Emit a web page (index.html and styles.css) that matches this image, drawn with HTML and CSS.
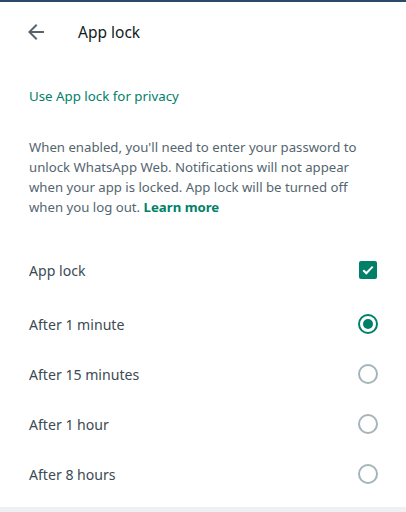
FILE: index.html
```html
<!DOCTYPE html>
<html>
<head>
<meta charset="utf-8">
<link rel="stylesheet" href="styles.css">
</head>
<body>
<div class="panel">
  <header class="header">
    <button class="back" aria-label="Back">
      <svg width="24" height="24" viewBox="0 0 24 24"><path d="M12 4l1.4 1.4L7.8 11H20v2H7.8l5.6 5.6L12 20l-8-8 8-8z" fill="currentColor"/></svg>
    </button>
    <h1 class="title">App lock</h1>
  </header>
  <div class="content">
    <div class="section-title">Use App lock for privacy</div>
    <p class="desc">When enabled, you'll need to enter your password to unlock WhatsApp Web. Notifications will not appear when your app is locked. App lock will be turned off when you log out. <a class="learn" href="#">Learn more</a></p>
    <div class="row row-first">
      <span class="label">App lock</span>
      <span class="checkbox">
        <svg width="12" height="10" viewBox="0 0 12 10"><path d="M1.3 5.2l3 3 6.4-6.6" fill="none" stroke="#fff" stroke-width="2"/></svg>
      </span>
    </div>
    <div class="row">
      <span class="label">After 1 minute</span>
      <span class="radio checked"></span>
    </div>
    <div class="row">
      <span class="label">After 15 minutes</span>
      <span class="radio"></span>
    </div>
    <div class="row">
      <span class="label">After 1 hour</span>
      <span class="radio"></span>
    </div>
    <div class="row">
      <span class="label">After 8 hours</span>
      <span class="radio"></span>
    </div>
  </div>
  <div class="footer"></div>
</div>
</body>
</html>
```
FILE: styles.css
```css
* { box-sizing: border-box; }
html, body { margin: 0; padding: 0; }
body {
  font-family: "Segoe UI", "Noto Sans", "Open Sans", sans-serif;
  background: #fff;
  width: 406px;
  height: 512px;
  overflow: hidden;
}
.panel {
  height: 512px;
  border-top: 2px solid #2b4a6a;
  display: flex;
  flex-direction: column;
}
.header {
  height: 60px;
  display: flex;
  align-items: center;
  padding-left: 24px;
}
.back {
  border: 0;
  background: none;
  padding: 0;
  color: #54656f;
  width: 24px;
  height: 24px;
  display: flex;
}
.title {
  margin: 0 0 0 30px;
  font-size: 15.5px;
  font-weight: 400;
  color: #111b21;
}
.content {
  flex: 1;
  padding: 0 28px 0 29px;
}
.section-title {
  margin-top: 24px;
  font-size: 13.3px;
  color: #008069;
  line-height: 20px;
}
.desc {
  margin: 31px 0 0;
  font-size: 13.2px;
  line-height: 20px;
  color: #54656f;
}
.learn {
  color: #008069;
  font-weight: 700;
  text-decoration: none;
}
.row {
  height: 50px;
  display: flex;
  align-items: center;
  justify-content: space-between;
}
.row-first { margin-top: 28px; margin-bottom: 4px; }
.label {
  font-size: 14.1px;
  color: #3b4a54;
}
.checkbox {
  width: 18px;
  height: 18px;
  margin-right: 1px;
  border-radius: 2px;
  background: #008069;
  display: flex;
  align-items: center;
  justify-content: center;
}
.radio {
  width: 20px;
  height: 20px;
  border-radius: 50%;
  border: 2px solid #a5b4bb;
  display: flex;
  align-items: center;
  justify-content: center;
}
.radio.checked { border-color: #008069; }
.radio.checked::after {
  content: "";
  width: 10px;
  height: 10px;
  border-radius: 50%;
  background: #008069;
}
.footer {
  height: 5px;
  background: #eef0f2;
}
```
